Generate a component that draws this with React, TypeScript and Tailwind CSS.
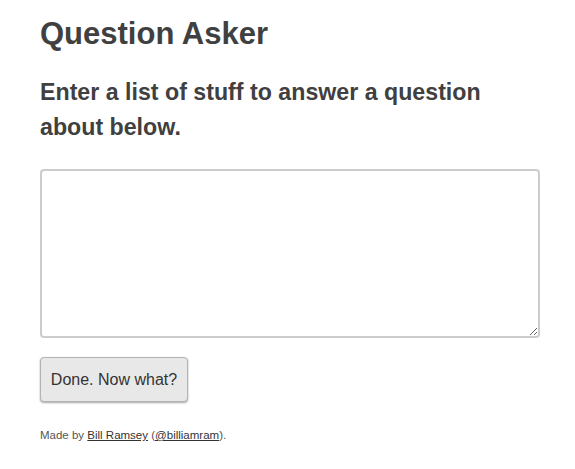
import React, { useState } from 'react';

const App: React.FC = () => {
  const [items, setItems] = useState('');

  return (
    <div className="min-h-screen bg-white px-[40px] pt-[14px] text-[#404040] font-[family-name:Liberation_Sans,Arial,sans-serif]">
      <h1 className="text-[31px] font-bold leading-[40px]">Question Asker</h1>
      <h2 className="mt-[21px] text-[23.2px] font-bold leading-[35px] w-[470px]">
        Enter a list of stuff to answer a question about below.
      </h2>

      <textarea
        value={items}
        onChange={e => setItems(e.target.value)}
        className="mt-[24px] block w-[500px] h-[169px] rounded-[4px] border-2 border-[#cccccc] bg-white p-2 text-[15px] outline-none"
      />

      <button className="mt-[19px] block h-[45px] w-[148px] rounded-[4px] border border-[#b3b3b3] bg-[#e8e8e8] text-[16px] text-[#333] shadow-[0_1px_2px_rgba(0,0,0,0.35)]">
        Done. Now what?
      </button>

      {/* Footer */}
      <p className="mt-[25px] text-[11.5px] text-[#555]">
        Made by{' '}
        <a href="#" className="underline text-[#333]">
          Bill Ramsey
        </a>{' '}
        (
        <a href="#" className="underline text-[#333]">
          @billiamram
        </a>
        ).
      </p>
    </div>
  );
};

export default App;
